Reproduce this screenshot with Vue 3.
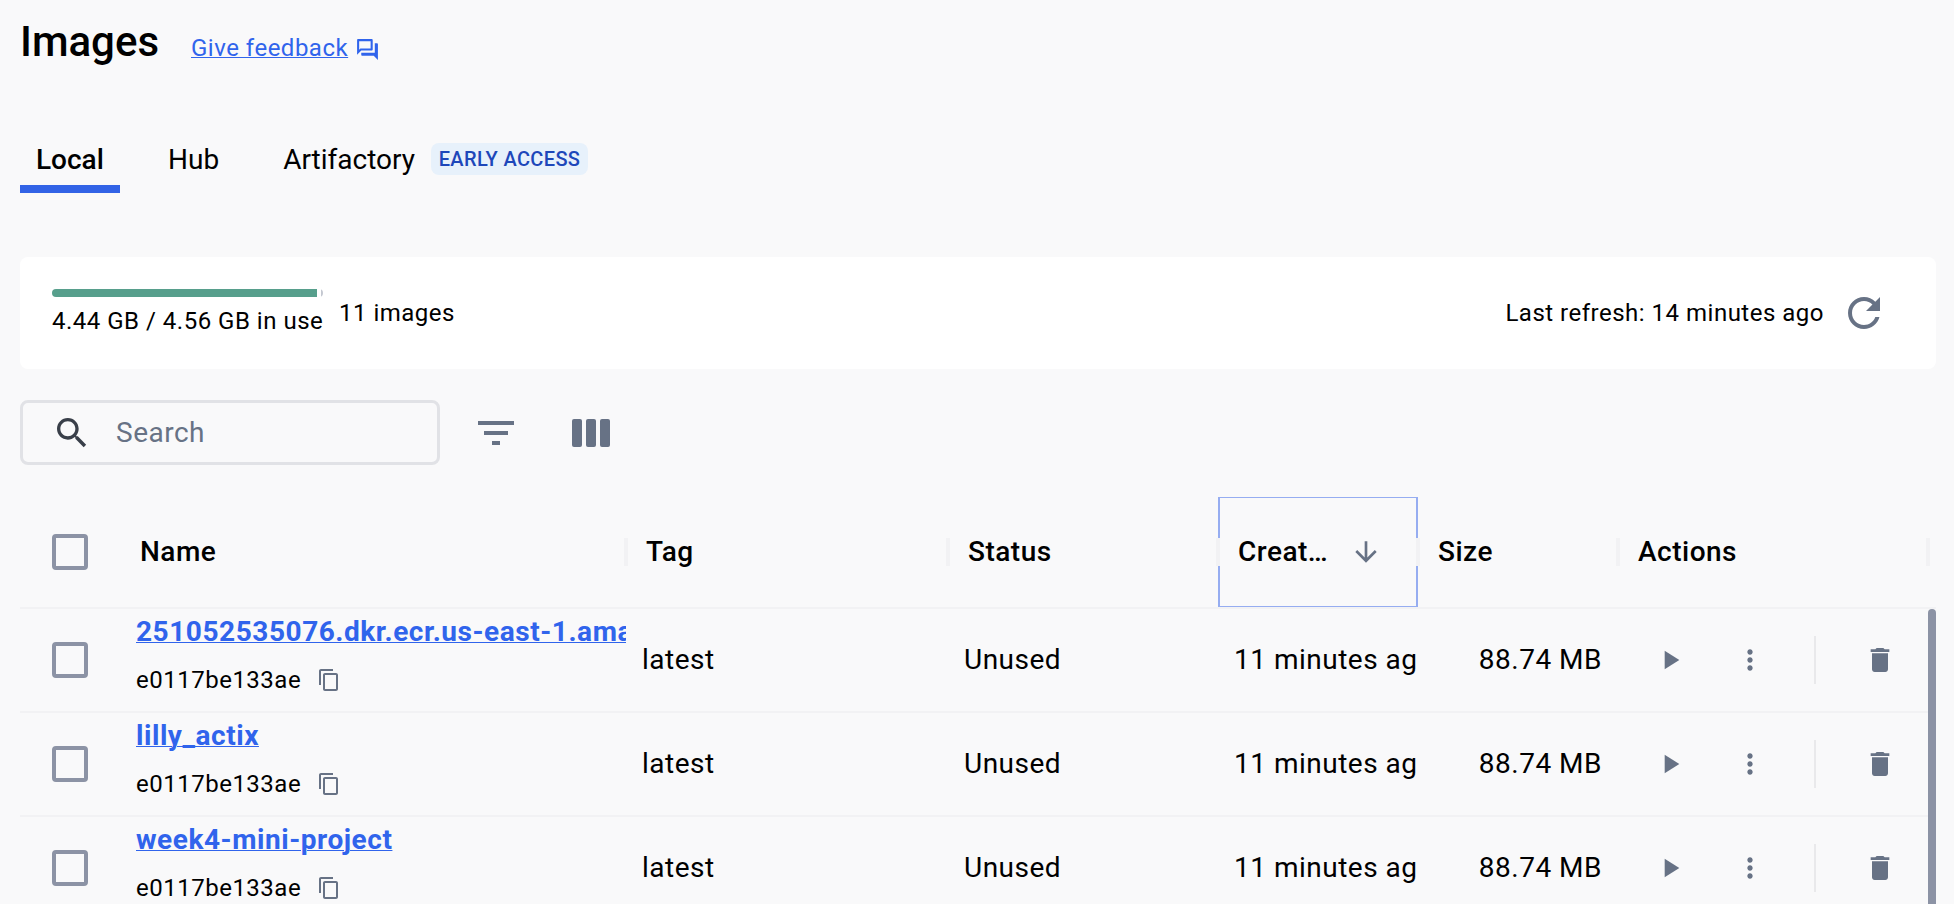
<script setup>
const columns = [
  { key: 'name', label: 'Name' },
  { key: 'tag', label: 'Tag' },
  { key: 'status', label: 'Status' },
  { key: 'created', label: 'Creat…' },
  { key: 'size', label: 'Size' },
  { key: 'actions', label: 'Actions' },
]
const shared = { id: 'e0117be133ae', tag: 'latest', status: 'Unused', created: '11 minutes ago', size: '88.74 MB' }
const rows = [
  { name: '251052535076.dkr.ecr.us-east-1.amazonaws.com', ...shared },
  { name: 'lilly_actix', ...shared },
  { name: 'week4-mini-project', ...shared },
]
</script>

<template>
  <main class="page">
    <header class="top">
      <h1>Images</h1>
      <a class="feedback"><span>Give feedback</span>
        <svg viewBox="0 0 24 24"><path d="M15 4v7H5.17L4 12.17V4h11m1-2H3c-.55 0-1 .45-1 1v14l4-4h10c.55 0 1-.45 1-1V3c0-.55-.45-1-1-1zm5 4h-2v9H6v2c0 .55.45 1 1 1h11l4 4V7c0-.55-.45-1-1-1z" /></svg>
      </a>
    </header>

    <nav class="tabs">
      <div class="tab active">Local</div>
      <div class="tab hub">Hub</div>
      <div class="tab art">Artifactory</div>
      <span class="badge">EARLY ACCESS</span>
    </nav>

    <section class="summary">
      <div class="usage">
        <div class="bar"><i class="used"></i><i class="rest"></i></div>
        <div class="usage-text">4.44 GB / 4.56 GB in use</div>
      </div>
      <div class="count">11 images</div>
      <div class="refresh">Last refresh: 14 minutes ago</div>
      <svg class="i48 refresh-icon" viewBox="0 0 24 24"><path d="M17.65 6.35C16.2 4.9 14.21 4 12 4c-4.42 0-7.99 3.58-7.99 8s3.57 8 7.99 8c3.73 0 6.84-2.55 7.73-6h-2.08c-.82 2.33-3.04 4-5.65 4-3.31 0-6-2.69-6-6s2.69-6 6-6c1.66 0 3.14.69 4.22 1.78L13 11h7V4l-2.35 2.35z" /></svg>
    </section>

    <section class="tools">
      <div class="search">
        <svg viewBox="0 0 24 24"><path d="M15.5 14h-.79l-.28-.27C15.41 12.59 16 11.11 16 9.5 16 5.91 13.09 3 9.5 3S3 5.91 3 9.5 5.91 16 9.5 16c1.61 0 3.09-.59 4.23-1.57l.27.28v.79l5 4.99L20.49 19l-4.99-5zm-6 0C7.01 14 5 11.99 5 9.5S7.01 5 9.5 5 14 7.01 14 9.5 11.99 14 9.5 14z" /></svg>
        <span>Search</span>
      </div>
      <svg class="i48 filter" viewBox="0 0 24 24"><path d="M10 18h4v-2h-4v2zM3 6v2h18V6H3zm3 7h12v-2H6v2z" /></svg>
      <svg class="cols" viewBox="0 0 38 28"><rect width="10" height="28" rx="2" /><rect x="14" width="10" height="28" rx="2" /><rect x="28" width="10" height="28" rx="2" /></svg>
    </section>

    <section class="table">
      <div class="row head">
        <div class="cell check"><i class="box"></i></div>
        <div v-for="c in columns" :key="c.key" class="cell" :class="c.key">
          <span>{{ c.label }}</span>
          <svg v-if="c.key === 'created'" class="arrow" viewBox="0 0 24 24"><path d="M20 12l-1.41-1.41L13 16.17V4h-2v12.17l-5.58-5.59L4 12l8 8 8-8z" /></svg>
          <i class="sep"></i>
        </div>
      </div>
      <div class="body">
        <div class="rows">
          <div v-for="r in rows" :key="r.name" class="row">
            <div class="cell check"><i class="box"></i></div>
            <div class="cell name">
              <a class="link">{{ r.name }}</a>
              <div class="id">{{ r.id }}
                <svg viewBox="0 0 24 24"><path d="M16 1H4c-1.100 0-2 .9-2 2v14h2V3h12V1zm3 4H8c-1.100 0-2 .9-2 2v14c0 1.100.9 2 2 2h11c1.100 0 2-.9 2-2V7c0-1.100-.9-2-2-2zm0 16H8V7h11v14z" /></svg>
              </div>
            </div>
            <div class="cell text tag">{{ r.tag }}</div>
            <div class="cell text status">{{ r.status }}</div>
            <div class="cell text created">{{ r.created }}</div>
            <div class="cell text size">{{ r.size }}</div>
            <div class="cell actions">
              <svg viewBox="0 0 24 24"><path d="M8 5v14l11-7z" /></svg>
              <svg class="more" viewBox="0 0 24 24"><path d="M12 8c1.100 0 2-.9 2-2s-.9-2-2-2-2 .9-2 2 .9 2 2 2zm0 2c-1.100 0-2 .9-2 2s.9 2 2 2 2-.9 2-2-.9-2-2-2zm0 6c-1.100 0-2 .9-2 2s.9 2 2 2 2-.9 2-2-.9-2-2-2z" /></svg>
              <i class="divider"></i>
              <svg viewBox="0 0 24 24"><path d="M6 19c0 1.100.9 2 2 2h8c1.100 0 2-.9 2-2V7H6v12zM19 4h-3.500l-1-1h-5l-1 1H5v2h14V4z" /></svg>
            </div>
          </div>
        </div>
        <div class="scrollbar"></div>
      </div>
    </section>
  </main>
</template>

<style>
html, body { background: #f9f9fa; }
</style>

<style scoped>
.page { box-sizing: border-box; height: 904px; padding: 0 18px 0 20px; overflow: hidden; background: #f9f9fa; color: #000; font-family: Roboto, "Liberation Sans", sans-serif; font-size: 28px; letter-spacing: .5px; display: flex; flex-direction: column; }
svg { display: block; flex: none; fill: #677285; }
.top { height: 112px; flex: none; display: flex; align-items: flex-start; }
h1 { margin: 18px 0 0; width: 171px; font-size: 42px; line-height: 48px; font-weight: 500; letter-spacing: 0; }
.feedback { margin-top: 32px; display: flex; color: #3064ec; font-size: 24px; line-height: 32px; letter-spacing: .5px; }
.feedback span { text-decoration: underline; text-decoration-thickness: 1px; text-underline-offset: 1px; }
.feedback svg { width: 25px; height: 25px; margin: 5px 0 0 7px; fill: #3064ec; }
.tabs { height: 81px; flex: none; display: flex; }
.tab { box-sizing: border-box; height: 81px; padding: 0 16px; line-height: 95px; letter-spacing: 0; }
.active { width: 100px; font-weight: 500; border-bottom: 8px solid #3263e6; }
.hub { margin-left: 32px; }
.art { margin-left: 32px; padding-right: 0; }
.badge { margin: 31px 0 0 16px; width: 157px; height: 32px; border-radius: 8px; background: #e7f1fb; color: #1d47ba; font-size: 20px; font-weight: 500; line-height: 32px; text-align: center; letter-spacing: .35px; }
.summary { box-sizing: border-box; height: 112px; flex: none; margin-top: 64px; padding: 0 48px 0 32px; border-radius: 8px; background: #fff; display: flex; align-items: center; font-size: 24px; letter-spacing: .5px; line-height: 32px; }
.usage { width: 271px; height: 48px; white-space: nowrap; }
.bar { height: 8px; display: flex; justify-content: space-between; border-radius: 4px; overflow: hidden; }
.used { width: 265px; background: #579f8c; }
.rest { width: 2px; background: #c4c8d1; }
.usage-text { margin-top: 8px; }
.count { margin-left: 16px; }
.refresh { margin-left: auto; margin-right: 16px; }
.i48 { width: 48px; height: 48px; }
.tools { height: 65px; flex: none; margin-top: 31px; display: flex; align-items: center; }
.search { box-sizing: border-box; width: 420px; height: 65px; border: 3px solid #e1e2e6; border-radius: 8px; padding-left: 29px; display: flex; align-items: center; color: #677285; }
.search svg { width: 40px; height: 40px; margin-right: 24px; fill: #393f49; }
.filter { margin-left: 32px; }
.cols { width: 38px; height: 28px; margin-left: 52px; }
.table { margin-top: 32px; width: 1916px; }
.row { box-sizing: border-box; width: 1908px; height: 104px; display: grid; grid-template-columns: 100px 506px 322px 270px 200px 200px 310px; border-bottom: 2px solid #f2f2f4; }
.cell { box-sizing: border-box; min-width: 0; padding: 0 16px; display: flex; align-items: center; white-space: nowrap; overflow: hidden; position: relative; }
.head { width: 1916px; height: 112px; font-weight: 500; }
.head .cell { padding: 0 20px; overflow: visible; }
.head span { margin-bottom: 2px; }
.cell.check { padding: 0 0 0 32px; }
.box { box-sizing: border-box; width: 36px; height: 36px; border: 4px solid #8c93a5; border-radius: 4px; }
.sep { position: absolute; right: -2px; top: 41px; width: 4px; height: 28px; background: #f2f2f4; z-index: 1; }
.head .created { border: solid #96adf1; border-width: 1px 2px; padding: 0 18px; }
.head .created .sep { right: -4px; top: 40px; }
.arrow { width: 32px; height: 32px; margin-left: 22px; }
.body { display: flex; }
.scrollbar { width: 8px; height: 320px; background: #8c93a5; border-radius: 4px; }
.rows .cell { padding-right: 0; }
.rows .text { padding-bottom: 2px; }
.rows .name { flex-direction: column; align-items: flex-start; }
.link { margin-top: 5px; line-height: 36px; color: #3064ec; font-weight: 700; text-decoration: underline; text-decoration-thickness: 1px; text-underline-offset: 1px; letter-spacing: .55px; }
.id { margin-top: 14px; display: flex; font-size: 24px; line-height: 32px; letter-spacing: .5px; }
.id svg { width: 24px; height: 24px; margin: 4px 0 0 16px; }
.rows .size { justify-content: flex-end; padding-right: 16px; }
.rows .actions { padding-left: 36px; }
.actions svg { width: 32px; height: 32px; }
.actions .more { margin-left: 48px; }
.divider { width: 2px; height: 48px; margin: 0 48px; background: #e9e9eb; }
</style>
